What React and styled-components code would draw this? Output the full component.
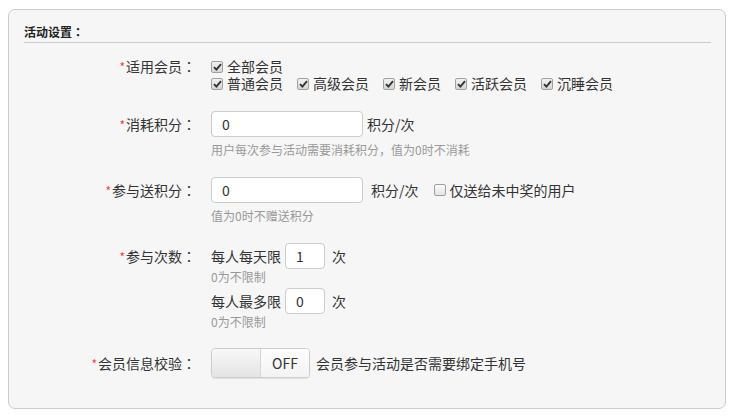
import styled, { createGlobalStyle } from "styled-components";

const GlobalStyle = createGlobalStyle`
  body {
    margin: 0;
    background: #fff;
    font-family: "Noto Sans CJK SC", "Noto Sans", sans-serif;
    font-size: 14px;
    color: #333;
  }
`;

const Page = styled.div`
  padding: 9px 10px 0 8px;
`;

const Panel = styled.div`
  box-sizing: border-box;
  width: 718px;
  height: 400px;
  border: 1px solid #ccc;
  border-radius: 7px;
  background: #f6f6f6;
  padding-top: 14px;
`;

const Title = styled.div`
  margin: 0 14px 0 15px;
  font-size: 12px;
  font-weight: bold;
  line-height: 16px;
  padding-bottom: 2px;
  border-bottom: 1px solid #ccc;
  color: #222;
`;

const Form = styled.div`
  padding-top: 15px;
`;

const Row = styled.div`
  display: flex;
  align-items: flex-start;
  margin-bottom: ${(p) => p.$gap ?? 19}px;
`;

const Label = styled.div`
  flex-shrink: 0;
  width: 187px;
  text-align: right;
  line-height: ${(p) => p.$lh}px;
  white-space: nowrap;
`;

const Colon = styled.span`
  font-family: "Noto Sans CJK TC", "Noto Sans CJK SC", sans-serif;
`;

const Star = styled.span`
  color: #f23c3c;
  font-size: 12px;
  margin-right: 1px;
`;

const Field = styled.div`
  margin-left: 15px;
  display: flex;
  flex-direction: column;
`;

const Line = styled.div`
  display: flex;
  align-items: center;
  height: ${(p) => p.$h ?? 26}px;
  margin-top: ${(p) => p.$mt ?? 0}px;
  white-space: nowrap;
`;

const Input = styled.input`
  box-sizing: border-box;
  width: ${(p) => p.$w}px;
  height: 26px;
  margin-left: ${(p) => p.$ml ?? 0}px;
  padding: 0 10px;
  border: 1px solid #ccc;
  border-radius: 4px;
  background: #fff;
  font-family: inherit;
  font-size: 14px;
  color: #333;
  outline: none;
`;

const Unit = styled.span`
  margin-left: ${(p) => p.$ml}px;
  line-height: 26px;
`;

const Hint = styled.div`
  font-size: 12px;
  line-height: 16px;
  color: #999;
  margin-top: ${(p) => p.$mt ?? 0}px;
  white-space: nowrap;
`;

const CheckItem = styled.label`
  display: inline-flex;
  align-items: center;
  height: 17px;
  margin-right: ${(p) => p.$mr ?? 14}px;
  margin-left: ${(p) => p.$ml ?? 0}px;
  line-height: 17px;
`;

const Box = styled.span`
  box-sizing: border-box;
  width: 12px;
  height: 12px;
  margin-right: 4px;
  border: 1px solid #a0a0a0;
  border-radius: 2px;
  background: ${(p) =>
    p.$checked
      ? "linear-gradient(#f2f2f2, #d6d6d6)"
      : "linear-gradient(#fafafa, #e4e4e4)"};
  display: flex;
  align-items: center;
  justify-content: center;
`;

const Toggle = styled.div`
  box-sizing: border-box;
  display: flex;
  width: 99px;
  height: 30px;
  border: 1px solid #ccc;
  border-radius: 4px;
  overflow: hidden;
  box-shadow: 0 1px 1px rgba(0, 0, 0, 0.08);
`;

const ToggleOff = styled.div`
  width: 48px;
  background: linear-gradient(#f8f8f8, #e4e4e4);
  border-right: 1px solid #d6d6d6;
`;

const ToggleText = styled.div`
  flex: 1;
  display: flex;
  align-items: center;
  justify-content: center;
  background: linear-gradient(#fdfdfd, #f3f3f3);
  font-size: 14px;
  color: #333;
`;

const Note = styled.span`
  margin-left: 6px;
`;

const Check = ({ checked, children, mr, ml }) => (
  <CheckItem $mr={mr} $ml={ml}>
    <Box $checked={checked}>
      {checked && (
        <svg width="9" height="8" viewBox="0 0 9 8">
          <path
            d="M1 4.2 L3.4 6.6 L8 1.2"
            fill="none"
            stroke="#333"
            strokeWidth="1.9"
          />
        </svg>
      )}
    </Box>
    {children}
  </CheckItem>
);

const FieldLabel = ({ lh, children }) => (
  <Label $lh={lh}>
    <Star>*</Star>
    {children}
    <Colon>：</Colon>
  </Label>
);

const members = ["普通会员", "高级会员", "新会员", "活跃会员", "沉睡会员"];

export default function App() {
  return (
    <>
      <GlobalStyle />
      <Page>
        <Panel>
          <Title>
            活动设置<Colon>：</Colon>
          </Title>
          <Form>
            <Row>
              <FieldLabel lh={17}>适用会员</FieldLabel>
              <Field>
                <Line $h={17}>
                  <Check checked>全部会员</Check>
                </Line>
                <Line $h={17}>
                  {members.map((m) => (
                    <Check checked key={m}>
                      {m}
                    </Check>
                  ))}
                </Line>
              </Field>
            </Row>

            <Row>
              <FieldLabel lh={26}>消耗积分</FieldLabel>
              <Field>
                <Line>
                  <Input $w={152} defaultValue="0" />
                  <Unit $ml={4}>积分/次</Unit>
                </Line>
                <Hint $mt={5}>用户每次参与活动需要消耗积分，值为0时不消耗</Hint>
              </Field>
            </Row>

            <Row>
              <FieldLabel lh={26}>参与送积分</FieldLabel>
              <Field>
                <Line>
                  <Input $w={152} defaultValue="0" />
                  <Unit $ml={8}>积分/次</Unit>
                  <Check ml={15} mr={0}>
                    仅送给未中奖的用户
                  </Check>
                </Line>
                <Hint $mt={5}>值为0时不赠送积分</Hint>
              </Field>
            </Row>

            <Row $gap={18}>
              <FieldLabel lh={26}>参与次数</FieldLabel>
              <Field>
                <Line>
                  每人每天限
                  <Input $w={40} $ml={4} defaultValue="1" />
                  <Unit $ml={7}>次</Unit>
                </Line>
                <Hint>0为不限制</Hint>
                <Line $mt={3}>
                  每人最多限
                  <Input $w={40} $ml={4} defaultValue="0" />
                  <Unit $ml={7}>次</Unit>
                </Line>
                <Hint>0为不限制</Hint>
              </Field>
            </Row>

            <Row>
              <FieldLabel lh={30}>会员信息校验</FieldLabel>
              <Field>
                <Line $h={30}>
                  <Toggle>
                    <ToggleOff />
                    <ToggleText>OFF</ToggleText>
                  </Toggle>
                  <Note>会员参与活动是否需要绑定手机号</Note>
                </Line>
              </Field>
            </Row>
          </Form>
        </Panel>
      </Page>
    </>
  );
}
